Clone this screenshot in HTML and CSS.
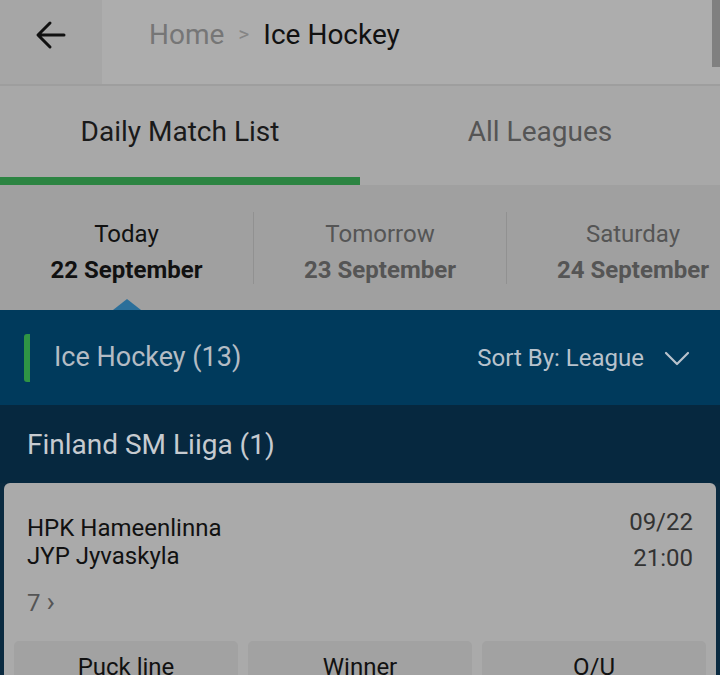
FILE: index.html
```html
<!DOCTYPE html>
<html lang="en">
<head>
    <meta charset="UTF-8">
    <meta name="viewport" content="width=device-width, initial-scale=1.0">
    <title>Ice Hockey</title>
    <link rel="stylesheet" href="styles.css">
</head>
<body>

<header class="topbar">
    <div class="back">
        <svg width="32" height="32" viewBox="0 0 32 32"><path d="M29 16H4M15 4L3 16l12 12" fill="none" stroke="#111" stroke-width="3" stroke-linecap="round" stroke-linejoin="round"/></svg>
    </div>
    <div class="crumbs">
        <span class="home">Home</span>
        <span class="sep">&gt;</span>
        <span class="current">Ice Hockey</span>
    </div>
    <div class="scroll"></div>
</header>

<nav class="tabs">
    <div class="tab active">Daily Match List</div>
    <div class="tab">All Leagues</div>
</nav>

<div class="days">
    <div class="day active">
        <span class="name">Today</span>
        <span class="date">22 September</span>
    </div>
    <div class="day">
        <span class="name">Tomorrow</span>
        <span class="date">23 September</span>
    </div>
    <div class="day">
        <span class="name">Saturday</span>
        <span class="date">24 September</span>
    </div>
</div>

<div class="sport">
    <div class="sport-title">Ice Hockey (13)</div>
    <div class="sort">Sort By: League
        <svg width="26" height="16" viewBox="0 0 26 16"><path d="M2 3l11 11L24 3" fill="none" stroke="#b8c2cc" stroke-width="2.2" stroke-linecap="round" stroke-linejoin="round"/></svg>
    </div>
</div>

<div class="league">Finland SM Liiga (1)</div>

<div class="matches">
    <div class="card">
        <div class="match">
            <div class="teams">
                <div>HPK Hameenlinna</div>
                <div>JYP Jyvaskyla</div>
            </div>
            <div class="when">
                <div>09/22</div>
                <div>21:00</div>
            </div>
        </div>
        <div class="more">7 <span class="chev">&rsaquo;</span></div>
        <div class="markets">
            <div class="market">Puck line</div>
            <div class="market">Winner</div>
            <div class="market">O/U</div>
        </div>
    </div>
</div>

</body>
</html>
```

FILE: styles.css
```css
body { margin: 0; width: 720px; height: 675px; overflow: hidden; font-family: Roboto, "Liberation Sans", sans-serif; background-color: #0a2a40; }

/* top bar */
.topbar { display: flex; height: 84px; background-color: #adadad; border-bottom: 2px solid #9e9e9e; }
.back { width: 102px; display: flex; align-items: center; justify-content: center; background-color: #a6a6a6; padding-bottom: 14px; box-sizing: border-box; }
.crumbs { flex: 1; display: flex; align-items: center; padding-left: 47px; padding-bottom: 16px; font-size: 28px; }
.crumbs .home { color: #767676; }
.crumbs .sep { color: #858585; font-size: 21px; margin: 0 14px; }
.crumbs .current { color: #111; }
.scroll { width: 8px; height: 67px; background-color: #808080; }

/* tabs */
.tabs { display: flex; height: 99px; background-color: #a8a8a8; }
.tab { flex: 1; display: flex; align-items: center; justify-content: center; font-size: 28px; color: #555; border-bottom: 8px solid transparent; }
.tab.active { color: #1a1a1a; border-bottom-color: #2c8442; }

/* day selector */
.days { display: flex; height: 125px; background-color: #a0a0a0; align-items: center; }
.day { flex: 0 0 253px; position: relative; display: flex; flex-direction: column; align-items: center; gap: 8px; height: 72px; justify-content: center; border-left: 1px solid #919191; color: #555; box-sizing: border-box; padding-top: 8px; }
.day:first-child { border-left: none; }
.day .name { font-size: 24px; }
.day .date { font-size: 24px; font-weight: bold; }
.day.active { color: #111; }
.day.active::after { content: ""; position: absolute; bottom: -26px; left: 50%; margin-left: -14px; border-left: 14px solid transparent; border-right: 14px solid transparent; border-bottom: 11px solid #2b6f9a; }

/* sport header */
.sport { display: flex; align-items: center; justify-content: space-between; height: 95px; background-color: #003a5c; padding: 0 30px 0 24px; }
.sport-title { font-size: 27px; color: #b4bcc4; border-left: 6px solid #2f9444; border-radius: 3px; padding-left: 24px; height: 48px; line-height: 46px; }
.sort { font-size: 24px; color: #b8c2cc; display: flex; align-items: center; gap: 20px; }

.league { height: 78px; background-color: #06283f; color: #c6cbd0; font-size: 28px; display: flex; align-items: center; padding-left: 27px; }

/* match card */
.matches { padding: 0 4px; background-color: #0a2a40; }
.card { background-color: #aaaaaa; border-radius: 6px 6px 0 0; padding: 31px 10px 0 10px; }
.match { display: flex; justify-content: space-between; padding: 0 13px; }
.teams { font-size: 24px; color: #111; line-height: 28px; }
.when { font-size: 24px; color: #333; text-align: right; line-height: 36px; margin-top: -10px; }
.more { font-size: 24px; color: #555; padding: 9px 13px 0; }
.more .chev { font-size: 28px; }
.markets { display: flex; gap: 10px; margin-top: 23px; }
.market { flex: 1; height: 50px; background-color: #a2a2a2; border-radius: 5px 5px 0 0; text-align: center; font-size: 24px; color: #111; padding-top: 12px; }
```
